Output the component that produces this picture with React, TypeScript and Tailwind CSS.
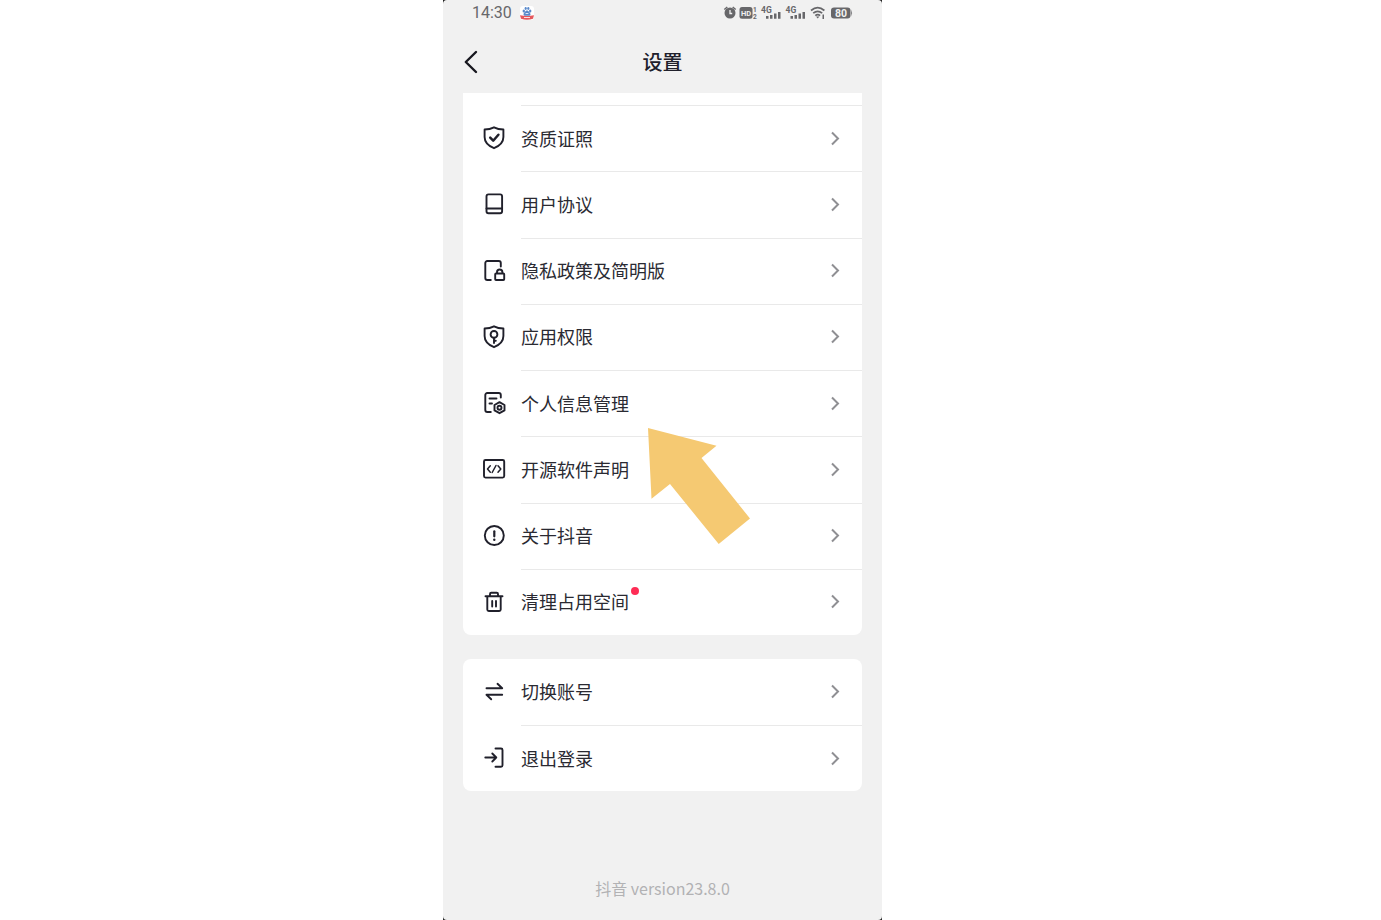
import type { ReactNode } from "react";

type Item = {
  label: string;
  icon: ReactNode;
  dot?: boolean;
};

function Icon({ children }: { children: ReactNode }) {
  return (
    <svg
      className="size-6 shrink-0"
      viewBox="0 0 24 24"
      fill="none"
      stroke="#20202b"
      strokeWidth="1.9"
      strokeLinecap="round"
      strokeLinejoin="round"
      aria-hidden="true"
    >
      {children}
    </svg>
  );
}

const shield =
  "M12 1.3C9.2 2.7 6 3.4 2.6 3.5V11c0 5.3 3.6 8.8 9.4 11.2 5.8-2.4 9.4-5.9 9.4-11.2V3.5C18 3.4 14.8 2.7 12 1.3z";

const aboutItems: Item[] = [
  {
    label: "资质证照",
    icon: (
      <Icon>
        <path d={shield} />
        <path d="M8.2 11.7l3 3 5.2-6" strokeWidth="2.5" />
      </Icon>
    ),
  },
  {
    label: "用户协议",
    icon: (
      <Icon>
        <rect x="4.5" y="2.4" width="15.6" height="18.8" rx="2" />
        <path d="M4.5 16.5h15.6" />
      </Icon>
    ),
  },
  {
    label: "隐私政策及简明版",
    icon: (
      <Icon>
        <path d="M8.8 21H5.3a2 2 0 0 1-2-2V4a2 2 0 0 1 2-2h11.5a2 2 0 0 1 2 2v3.5" />
        <rect x="13.2" y="14.5" width="9" height="6.5" rx="0.8" />
        <path d="M15 14v-.8a2.7 2.7 0 0 1 5.4 0v.8" />
      </Icon>
    ),
  },
  {
    label: "应用权限",
    icon: (
      <Icon>
        <path d={shield} />
        <circle cx="12" cy="9.4" r="3.4" />
        <path d="M12 13v5M12 15.8h1.8" />
      </Icon>
    ),
  },
  {
    label: "个人信息管理",
    icon: (
      <Icon>
        <path d="M8.8 21H5.3a2 2 0 0 1-2-2V4a2 2 0 0 1 2-2h11.5a2 2 0 0 1 2 2v2.5" />
        <path d="M7.5 7.5h7M7.5 12.5h2.5" />
        <path d="M17.5 11.2l5 2.8v5.4l-5 2.8-5-2.8V14z" />
        <circle cx="17.500" cy="16.7" r="2" />
      </Icon>
    ),
  },
  {
    label: "开源软件声明",
    icon: (
      <Icon>
        <rect x="2" y="3" width="20.200" height="17.600" rx="1.500" />
        <path d="M8.300 8.800L5.500 12l2.800 3.200M16 8.800l2.800 3.200-2.800 3.200M14 8.500L10.200 15.500" strokeWidth="1.500" />
      </Icon>
    ),
  },
  {
    label: "关于抖音",
    icon: (
      <Icon>
        <circle cx="12.300" cy="11.500" r="9.500" />
        <path d="M12.300 7.300v5" strokeWidth="2.200" />
        <path d="M12.300 15.700v.1" strokeWidth="2.400" />
      </Icon>
    ),
  },
  {
    label: "清理占用空间",
    dot: true,
    icon: (
      <Icon>
        <path d="M3.500 6.300h17M5.300 6.500v13a1.500 1.500 0 0 0 1.500 1.500h10.400a1.500 1.500 0 0 0 1.500-1.500v-13" />
        <path d="M8 6V4a1.300 1.300 0 0 1 1.300-1.300h5.400A1.300 1.300 0 0 1 16 4v2" />
        <path d="M10.200 11v5.500M14 11v5.500" />
      </Icon>
    ),
  },
];

const accountItems: Item[] = [
  {
    label: "切换账号",
    icon: (
      <Icon>
        <path d="M4.500 8.300h15.700l-4.700-4.500M20.200 14.800H4.500l4.700 4.500" />
      </Icon>
    ),
  },
  {
    label: "退出登录",
    icon: (
      <Icon>
        <path d="M3.300 11.500h11M10.300 7.500l4 4-4 4" />
        <path d="M13.500 2.500H19a1.500 1.500 0 0 1 1.500 1.500v15.300a1.500 1.500 0 0 1-1.500 1.500h-5.500" />
      </Icon>
    ),
  },
];

function Row({ item, divider }: { item: Item; divider: boolean }) {
  return (
    <li className="flex">
      <button className="flex flex-1 items-stretch pl-[19px] text-left">
        <span className="flex w-[39px] items-center">{item.icon}</span>
        <span
          className={
            divider
              ? "flex flex-1 items-center justify-between border-t border-[#e9e9e9] pr-5"
              : "flex flex-1 items-center justify-between pr-5"
          }
        >
          <span className="flex pb-0.5 text-lg text-[#2a2a32]">
            {item.label}
            {item.dot && <span className="ml-0.5 size-2 rounded-full bg-[#fe2c55]" />}
          </span>
          <svg className="h-4 w-3.5" viewBox="0 0 14 16" fill="none" stroke="#8f8f93" strokeWidth="2" aria-hidden="true">
            <path d="M4 1.500l6 6-6 6" />
          </svg>
        </span>
      </button>
    </li>
  );
}

function StatusIcons() {
  return (
    <svg className="h-4 w-[130px]" viewBox="0 0 130 16" fill="#67676a" aria-hidden="true">
      {/* alarm */}
      <circle cx="7" cy="8" r="5.500" />
      <path d="M1.300 4.500l3-2.500M12.700 4.500l-3-2.500" stroke="#67676a" strokeWidth="1.500" />
      <path d="M7 5v3.500h2.200" stroke="#f1f1f1" strokeWidth="1.300" fill="none" />
      {/* HD */}
      <rect x="16.500" y="2" width="13" height="11.800" rx="2.500" />
      <text x="23" y="10.500" fontSize="7.500" fontWeight="700" fill="#f1f1f1" textAnchor="middle">HD</text>
      <text x="30" y="7" fontSize="6.500" fontWeight="700">1</text>
      <text x="30" y="14" fontSize="6.500" fontWeight="700">2</text>
      {/* signal */}
      <text x="38" y="8" fontSize="8.500" fontWeight="700">4G</text>
      <path d="M43 11h2.500v2.800H43zM47 10h2.500v3.800H47zM51 8.500h2.500v5.300H51zM55 7h2.500v6.800H55z" />
      <text x="62.500" y="8" fontSize="8.500" fontWeight="700">4G</text>
      <path d="M67.500 11H70v2.800h-2.500zM71.500 10H74v3.800h-2.500zM75.500 8.500H78v5.300h-2.500zM79.500 7H82v6.800h-2.500z" />
      {/* wifi */}
      <g fill="none" stroke="#67676a" strokeWidth="1.700">
        <path d="M88 5.500q6.700-5.600 13.400 0M90.200 8.200q4.500-3.800 9 0M92.300 10.600q2.400-2 4.800 0" />
      </g>
      <path d="M93 11.600h3.400l-1.700 2zM99.500 9.500h1.500V14h-1.500z" />
      {/* battery */}
      <rect x="108" y="2.500" width="19.500" height="11" rx="3" />
      <path d="M128.200 4.500q1.800 3.500 0 7z" />
      <text x="118" y="11.700" fontSize="10.500" fontWeight="700" fill="#f1f1f1" textAnchor="middle">80</text>
    </svg>
  );
}

export default function App() {
  return (
    <div className="flex min-h-screen justify-center bg-white pr-14 font-['Noto_Sans_CJK_SC',sans-serif]">
      <div className="flex w-full max-w-[439px] bg-[#222]">
        <main className="relative flex flex-1 flex-col rounded-sm bg-[#f1f1f1] px-5">
          <div className="flex h-[26px] items-center justify-between pr-[9px] pl-2 font-['Roboto',sans-serif]">
            <div className="flex items-center gap-2">
              <span className="pl-px text-base text-[#67676a]">14:30</span>
              <svg className="size-3.5" viewBox="0 0 14 14" aria-hidden="true">
                <rect width="14" height="14" rx="3" fill="#fff" />
                <path d="M0 9.300q7 1.400 14 0l-1 3.500q-6 1.800-12 0z" fill="#e5585c" />
                <g fill="#5a8acb">
                  <ellipse cx="3.800" cy="5" rx="1.200" ry="1.500" />
                  <ellipse cx="5.700" cy="2.500" rx="1.100" ry="1.400" />
                  <ellipse cx="8.300" cy="2.500" rx="1.100" ry="1.400" />
                  <ellipse cx="10.200" cy="5" rx="1.200" ry="1.500" />
                  <path d="M7 4.500c1.500 0 3.500 2.700 3.500 4S9 9.800 7 9.800s-3.500 0-3.500-1.300 2-4 3.500-4z" />
                </g>
                <path d="M5.600 7.500h2.800M4 11.500h6" stroke="#fff" strokeWidth="0.800" />
              </svg>
            </div>
            <StatusIcons />
          </div>

          <header className="grid h-[67px] grid-cols-[1fr_auto_1fr] items-center pt-1">
            <button aria-label="返回" className="justify-self-start">
              <svg
                className="h-6 w-4"
                viewBox="0 0 16 24"
                fill="none"
                stroke="#17171f"
                strokeWidth="2.400"
                strokeLinecap="round"
                strokeLinejoin="round"
              >
                <path d="M13 2L2.800 12 13 22" />
              </svg>
            </button>
            <h1 className="text-xl font-medium text-[#20202b]">设置</h1>
          </header>

          {/* bottom part of the scrolled list */}
          <div className="rounded-b-lg bg-white pt-3">
            <ul className="grid min-h-[530px] auto-rows-fr">
              {aboutItems.map((item) => (
                <Row key={item.label} item={item} divider />
              ))}
            </ul>
          </div>

          <ul className="mt-6 grid min-h-[132px] auto-rows-fr rounded-lg bg-white">
            {accountItems.map((item, i) => (
              <Row key={item.label} item={item} divider={i > 0} />
            ))}
          </ul>

          <footer className="mt-auto pb-5 text-center text-base text-[#b2b2b4]">
            抖音 version23.8.0
          </footer>

          {/* pointer over the personal info row */}
          <svg
            className="pointer-events-none absolute top-[428px] left-[205px] h-[116px] w-[102px]"
            viewBox="0 0 102 116"
            fill="#f5c972"
            aria-hidden="true"
          >
            <path d="M0 0l68.500 17.700-15 12.400L102 90.500 70.700 116 22 56 3.500 70.700z" />
          </svg>
        </main>
      </div>
    </div>
  );
}
